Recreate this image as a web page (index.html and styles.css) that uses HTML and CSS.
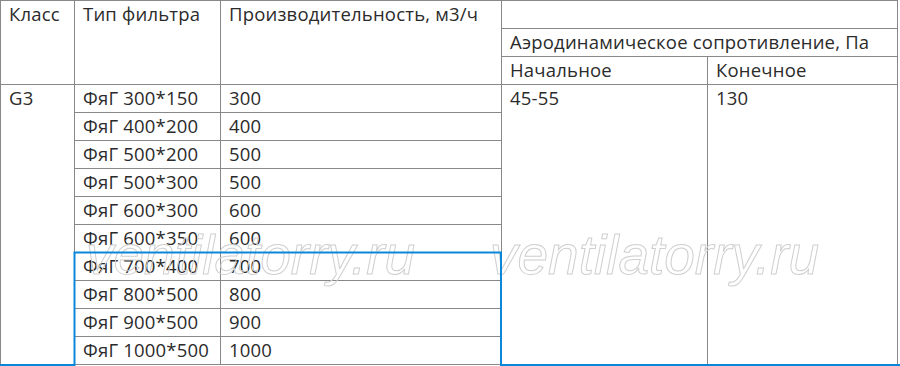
FILE: index.html
```html
<!DOCTYPE html>
<html lang="ru">
<head>
<meta charset="utf-8">
<title>Фильтры ФяГ</title>
<link rel="stylesheet" href="styles.css">
</head>
<body>
<div class="wrap">
<table class="spec">
  <colgroup>
    <col class="c1"><col class="c2"><col class="c3"><col class="c4"><col class="c5">
  </colgroup>
  <tr>
    <td rowspan="3">Класс</td>
    <td rowspan="3">Тип фильтра</td>
    <td rowspan="3">Производительность, м3/ч</td>
    <td colspan="2"></td>
  </tr>
  <tr><td colspan="2">Аэродинамическое сопротивление, Па</td></tr>
  <tr><td>Начальное</td><td>Конечное</td></tr>
  <tr>
    <td rowspan="10">G3</td>
    <td>ФяГ 300*150</td><td>300</td>
    <td rowspan="10">45-55</td>
    <td rowspan="10">130</td>
  </tr>
  <tr><td>ФяГ 400*200</td><td>400</td></tr>
  <tr><td>ФяГ 500*200</td><td>500</td></tr>
  <tr><td>ФяГ 500*300</td><td>500</td></tr>
  <tr><td>ФяГ 600*300</td><td>600</td></tr>
  <tr><td>ФяГ 600*350</td><td>600</td></tr>
  <tr><td>ФяГ 700*400</td><td>700</td></tr>
  <tr><td>ФяГ 800*500</td><td>800</td></tr>
  <tr><td>ФяГ 900*500</td><td>900</td></tr>
  <tr><td>ФяГ 1000*500</td><td>1000</td></tr>
</table>
<div class="wm wm-1">ventilatorry.ru</div>
<div class="wm wm-2">ventilatorry.ru</div>
<svg class="sel" width="900" height="366" viewBox="0 0 900 366">
  <polyline points="0,365 74.5,365 74.5,252.5 501,252.5 501,365 900,365" fill="none" stroke="#0a87d9" stroke-width="2"/>
</svg>
</div>
</body>
</html>
```
FILE: styles.css
```css
html, body {
  margin: 0;
  padding: 0;
  background: #fff;
}
.wrap {
  position: relative;
  width: 900px;
  height: 366px;
  overflow: hidden;
}
.spec {
  border-collapse: collapse;
  width: 897px;
  table-layout: fixed;
  font-family: "Open Sans", "DejaVu Sans", sans-serif;
  font-size: 18.5px;
  letter-spacing: 0.2px;
  color: #2b2b2b;
}
.c1 { width: 74px; }
.c2 { width: 146px; }
.c3 { width: 281px; }
.c4 { width: 206px; }
.c5 { width: 190px; }
.spec td {
  border: 1px solid #888;
  padding: 3px 8px 4px 8px;
  line-height: 20px;
  height: 20px;
  vertical-align: top;
  white-space: nowrap;
  text-align: left;
}
.wm {
  position: absolute;
  top: 222px;
  font-family: "Liberation Sans", Arial, sans-serif;
  font-style: italic;
  font-size: 55px;
  line-height: 66px;
  color: transparent;
  -webkit-text-stroke: 1px #cfcfcf;
  pointer-events: none;
}
.wm-1 { left: 86px; }
.wm-2 { left: 490px; }
.sel {
  position: absolute;
  left: 0;
  top: 0;
}
```
